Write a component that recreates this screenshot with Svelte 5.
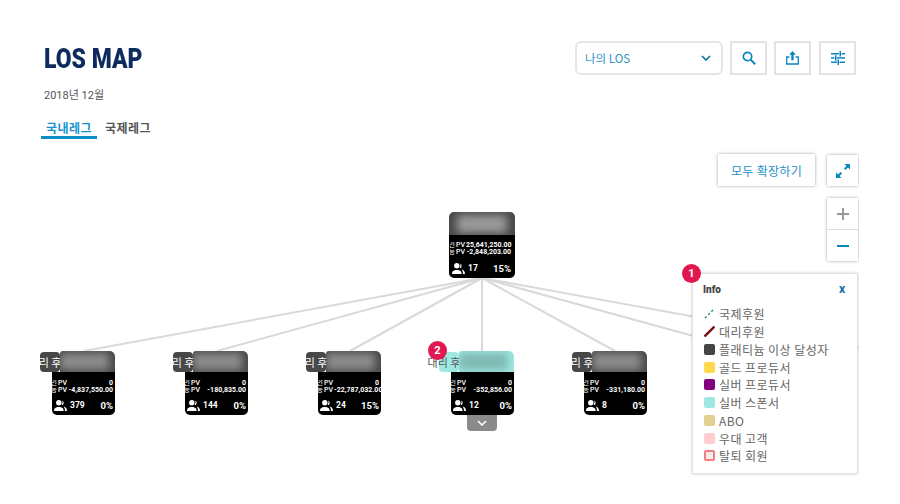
<script>
	const nodes = [
		{ x: 52, pv: '0', gpv: '-4,837,550.00', count: 379, pct: '0%' },
		{ x: 185, pv: '0', gpv: '-180,835.00', count: 144, pct: '0%' },
		{ x: 318, pv: '0', gpv: '-22,787,032.00', count: 24, pct: '15%' },
		{ x: 451, pv: '0', gpv: '-352,856.00', count: 12, pct: '0%', teal: true, more: true },
		{ x: 584, pv: '0', gpv: '-331,180.00', count: 8, pct: '0%' }
	];
	const lineEnds = [84, 217, 350, 482, 615, 748, 881];
	const legend = [
		{ label: '국제후원', kind: 'dash' },
		{ label: '대리후원', kind: 'slash' },
		{ label: '플래티늄 이상 달성자', color: '#444444' },
		{ label: '골드 프로듀서', color: '#ffd84d' },
		{ label: '실버 프로듀서', color: '#800080' },
		{ label: '실버 스폰서', color: '#9ee8e2' },
		{ label: 'ABO', color: '#e3d091' },
		{ label: '우대 고객', color: '#ffcfd0' },
		{ label: '탈퇴 회원', color: '#eeeeee', border: '#f47c7c' }
	];
</script>

{#snippet people()}
	<svg class="people" viewBox="0 0 13 11" width="13" height="11">
		<circle cx="4.800" cy="2.800" r="2.700" fill="#fff" />
		<path d="M0 11c0-1 .1-2.300 1.200-3l2-1h3.200l2 1c1.100.7 1.200 2 1.200 3z" fill="#fff" />
		<path d="M8.300.4a2.800 2.800 0 0 1 0 4.800l-.6-1a3.600 3.600 0 0 0 .6-3.800zM9.700 6.500c2 .5 3.300 1.800 3.300 4.500h-2c0-2-.4-3.300-1.300-4.500z" fill="#fff" />
	</svg>
{/snippet}

<main class="page">
	<header class="top">
		<div class="heading">
			<h1>LOS MAP</h1>
			<p class="date">2018년 12월</p>
		</div>
		<div class="tools">
			<div class="select">
				<span>나의 LOS</span>
				<svg viewBox="0 0 10 6" width="10" height="6"><path d="M1 1l4 4 4-4" fill="none" stroke="#0a6f9f" stroke-width="1.600" /></svg>
			</div>
			<button class="tool" aria-label="search">
				<svg viewBox="0 0 14 14" width="14" height="14"><circle cx="5.500" cy="5.500" r="4.200" fill="none" stroke="#0a86bf" stroke-width="1.700" /><path d="M8.600 8.600l4.600 4.600" stroke="#0a86bf" stroke-width="2" /></svg>
			</button>
			<button class="tool" aria-label="export">
				<svg viewBox="0 0 13 14" width="13" height="14"><path d="M6.500 0l3.400 3.800H7.700v5.400H5.300V3.800H3.100z" fill="#0a86bf" /><path d="M3.400 6H.7v7h11.600V6H9.600" fill="none" stroke="#0a86bf" stroke-width="1.300" /></svg>
			</button>
			<button class="tool last" aria-label="settings">
				<svg viewBox="0 0 14 14" width="14" height="14" fill="#0a86bf"><rect y="2" width="8" height="1.500" /><rect x="10.500" y="2" width="3.500" height="1.500" /><rect x="8.500" y="0" width="1.500" height="5.500" /><rect y="6.200" width="3.500" height="1.500" /><rect x="6" y="6.200" width="8" height="1.500" /><rect x="4" y="4.200" width="1.500" height="5.500" /><rect y="10.500" width="6" height="1.500" /><rect x="8.500" y="10.500" width="5.500" height="1.500" /><rect x="6.500" y="8.500" width="1.500" height="5.500" /></svg>
			</button>
		</div>
	</header>

	<nav class="tabs">
		<span class="tab active">국내레그</span>
		<span class="tab">국제레그</span>
	</nav>

	<section class="stage">
		<svg class="lines" width="859" height="354">
			{#each lineEnds as x}
				<line x1="482" y1="128" x2={x} y2="201" stroke="#d9d9d9" stroke-width="2" />
			{/each}
		</svg>

		<div class="node root">
			<div class="head"><div class="blur"></div></div>
			<div class="body">
				<div class="row"><b class="cut">인</b><span>PV</span><span class="num">25,641,250.00</span></div>
				<div class="row"><b class="cut">등</b><span>PV</span><span class="num">-2,848,203.00</span></div>
				<div class="foot">{@render people()}<span class="count">17</span><span class="pct">15%</span></div>
			</div>
		</div>

		{#each nodes as n}
			<div class="node child" class:teal={n.teal} style="left: {n.x}px">
				<div class="tag"><span>대리 후원</span></div>
				<div class="head"><div class="blur"></div></div>
				<div class="body">
					<div class="row"><b class="cut">인</b><span>PV</span><span class="num">{n.pv}</span></div>
					<div class="row"><b class="cut">등</b><span>PV</span><span class="num">{n.gpv}</span></div>
					<div class="foot">{@render people()}<span class="count">{n.count}</span><span class="pct">{n.pct}</span></div>
				</div>
				{#if n.more}
					<div class="more">
						<svg viewBox="0 0 10 6" width="10" height="6"><path d="M1 1l4 4 4-4" fill="none" stroke="#fff" stroke-width="1.600" /></svg>
					</div>
					<span class="badge two">2</span>
				{/if}
			</div>
		{/each}

		<button class="expand-all">모두 확장하기</button>
		<button class="expand" aria-label="expand">
			<svg viewBox="0 0 16 16" width="16" height="16" fill="#0a86bf"><path d="M9.500 1H15v5.500l-2-2-2.600 2.600-1.500-1.500L11.500 3z" /><path d="M6.500 15H1V9.500l2 2 2.600-2.600 1.500 1.500L4.500 13z" /></svg>
		</button>
		<div class="zoom">
			<button aria-label="zoom in"><svg viewBox="0 0 12 12" width="12" height="12"><path d="M6 0v12M0 6h12" stroke="#999" stroke-width="2" /></svg></button>
			<button aria-label="zoom out"><svg viewBox="0 0 12 12" width="12" height="12"><path d="M0 6h12" stroke="#0a86bf" stroke-width="2" /></svg></button>
		</div>

		<aside class="info">
			<span class="badge one">1</span>
			<div class="info-head"><b>Info</b><span class="close">x</span></div>
			<ul>
				{#each legend as item}
					<li>
						{#if item.kind === 'dash'}
							<svg viewBox="0 0 12 12" width="11" height="11"><path d="M1 11L11 1" stroke="#13843f" stroke-width="1.400" stroke-dasharray="2.500 2.500" fill="none" /></svg>
						{:else if item.kind === 'slash'}
							<svg viewBox="0 0 12 12" width="11" height="11"><path d="M.5 11.500L11.500 .5" stroke="#7d0d12" stroke-width="2.600" fill="none" /></svg>
						{:else}
							<i class="swatch" style="background: {item.color}; border-color: {item.border ?? item.color}"></i>
						{/if}
						<span>{item.label}</span>
					</li>
				{/each}
			</ul>
		</aside>
	</section>
</main>

<style>
	:global(body) {
		background: #fff;
		font-family: 'Noto Sans CJK KR', 'Noto Sans', sans-serif;
	}
	.page {
		width: 900px;
		height: 504px;
		box-sizing: border-box;
		padding: 41px 44px 0;
		overflow: hidden;
	}
	.top {
		display: flex;
		justify-content: space-between;
		align-items: flex-start;
	}
	h1 {
		margin: 0;
		font: 900 27px/36px Roboto, sans-serif;
		color: #0d2b5e;
		transform: scaleX(0.85);
		transform-origin: left;
		white-space: nowrap;
	}
	.date {
		margin: 11px 0 0;
		font: 400 11px/16px Roboto, 'Noto Sans CJK KR', sans-serif;
		color: #555;
	}
	.tools {
		display: flex;
		gap: 7px;
	}
	.select {
		width: 148px;
		height: 34px;
		box-sizing: border-box;
		border: 2px solid #e6e6e6;
		border-radius: 6px;
		display: flex;
		align-items: center;
		justify-content: space-between;
		padding: 0 10px 0 8px;
		font-size: 11.5px;
		color: #2d93c7;
	}
	.tool {
		width: 37px;
		height: 34px;
		border: 2px solid #e3e3e3;
		background: #fff;
		padding: 0;
		display: flex;
		align-items: center;
		justify-content: center;
	}
	.tool.last {
		margin-left: 1px;
	}
	.tabs {
		display: flex;
		gap: 3px;
		margin: 15px 0 0 -3px;
	}
	.tab {
		height: 20px;
		line-height: 18px;
		box-sizing: border-box;
		font-size: 12px;
		letter-spacing: 0.4px;
		font-weight: 700;
		color: #555;
		width: 56px;
		text-align: center;
		white-space: nowrap;
	}
	.tab.active {
		color: #1594cf;
		border-bottom: 3px solid #0a8fc7;
	}
	.stage {
		position: relative;
		width: 859px;
		height: 354px;
		margin: 11px 0 0 -44px;
		overflow: hidden;
	}
	.lines {
		position: absolute;
		left: 0;
		top: 0;
	}
	.node {
		position: absolute;
		font: 700 7px/7px Roboto, 'Noto Sans CJK KR', sans-serif;
		color: #fff;
	}
	.root {
		left: 449px;
		top: 62px;
		width: 66px;
		height: 66px;
	}
	.child {
		top: 201px;
		width: 63px;
		height: 64px;
	}
	.head,
	.body {
		position: relative;
	}
	.head {
		height: 23px;
		background: #484848;
		border-radius: 5px 5px 0 0;
		overflow: hidden;
	}
	.child .head {
		height: 21px;
		z-index: 1;
		clip-path: inset(0 0 0 8px round 3px 5px 0 0);
	}
	.blur {
		position: absolute;
		inset: 3px 8px 2px 8px;
		background: #9a9a9a;
		filter: blur(4px);
	}
	.child .blur {
		background: #8c8c8c;
		inset: 2px 6px 2px 8px;
	}
	.body {
		height: 43px;
		box-sizing: border-box;
		background: #000;
		border-radius: 0 0 5px 5px;
		padding: 8px 2px 0 0;
		display: flex;
		flex-direction: column;
	}
	.root .body {
		padding: 7px 4px 0 1px;
	}
	.row {
		display: flex;
		align-items: center;
		gap: 1px;
		height: 7px;
		white-space: nowrap;
	}
	.row span:first-of-type {
		font-weight: 500;
	}
	.cut {
		flex: none;
		width: 5px;
		overflow: hidden;
		font-size: 7px;
		font-weight: 400;
		direction: rtl;
	}
	.num {
		margin-left: auto;
	}
	.foot {
		display: flex;
		align-items: center;
		margin-top: auto;
		height: 13px;
		margin-bottom: 3px;
		padding-left: 2px;
		font-size: 8.5px;
	}
	.people {
		display: block;
	}
	.count {
		margin-left: 3px;
	}
	.pct {
		margin-left: auto;
		font-size: 9.5px;
	}
	.tag {
		position: absolute;
		left: -12px;
		top: 1px;
		width: 20px;
		height: 20px;
		background: #484848;
		border-radius: 4px;
		display: flex;
		justify-content: center;
		align-items: center;
		white-space: nowrap;
		font: 400 11px/12px 'Noto Sans CJK KR', sans-serif;
		color: #fff;
	}
	.teal .head {
		background: #9ee8e2;
	}
	.teal .blur {
		background: #7fb8b2;
	}
	.teal .tag {
		background: #9ee8e2;
		color: #555;
	}
	.more {
		position: absolute;
		left: 16px;
		top: 64px;
		width: 30px;
		height: 16px;
		background: #8a8a8a;
		border-radius: 0 0 4px 4px;
		display: flex;
		align-items: center;
		justify-content: center;
	}
	.badge {
		position: absolute;
		width: 19px;
		height: 19px;
		border-radius: 50%;
		background: #e0184f;
		color: #fff;
		font: 700 11px/19px Roboto, sans-serif;
		text-align: center;
		z-index: 3;
	}
	.two {
		left: -23px;
		top: -10px;
	}
	.one {
		left: -11px;
		top: -10px;
	}
	button {
		font-family: inherit;
		cursor: pointer;
	}
	.expand-all,
	.expand,
	.zoom {
		position: absolute;
		background: #fff;
		border: none;
		box-shadow: 0 0 3px rgba(0, 0, 0, 0.35);
	}
	.expand-all {
		left: 718px;
		top: 4px;
		width: 97px;
		height: 32px;
		font-size: 12px;
		letter-spacing: 0.3px;
		color: #1b90c8;
		padding: 0;
	}
	.expand {
		left: 827px;
		top: 5px;
		width: 31px;
		height: 31px;
		padding: 0;
		display: flex;
		align-items: center;
		justify-content: center;
	}
	.zoom {
		left: 827px;
		top: 48px;
		width: 31px;
		height: 63px;
		display: flex;
		flex-direction: column;
	}
	.zoom button {
		flex: 1;
		background: none;
		border: none;
		padding: 0;
		display: flex;
		align-items: center;
		justify-content: center;
	}
	.zoom button + button {
		border-top: 1px solid #ddd;
	}
	.info {
		position: absolute;
		left: 692px;
		top: 123px;
		width: 166px;
		height: 201px;
		box-sizing: border-box;
		background: #fff;
		border: 1px solid #e2e2e2;
		box-shadow: 0 0 3px rgba(0, 0, 0, 0.2);
		padding: 9px 12px 0 11px;
	}
	.info-head {
		display: flex;
		justify-content: space-between;
		margin-left: -1px;
		font: 700 10px/14px Roboto, sans-serif;
		color: #444;
	}
	.close {
		color: #0a6f9f;
		font-size: 12px;
		line-height: 12px;
	}
	ul {
		list-style: none;
		margin: 8px 0 0;
		padding: 0;
	}
	li {
		display: flex;
		align-items: center;
		gap: 4px;
		height: 17.75px;
		font-size: 12px;
		letter-spacing: 0.45px;
		color: #666;
		white-space: nowrap;
	}
	li svg,
	.swatch {
		flex: none;
		display: block;
		width: 11px;
		height: 11px;
		box-sizing: border-box;
	}
	.swatch {
		border: 2px solid;
		border-radius: 2px;
	}
</style>
